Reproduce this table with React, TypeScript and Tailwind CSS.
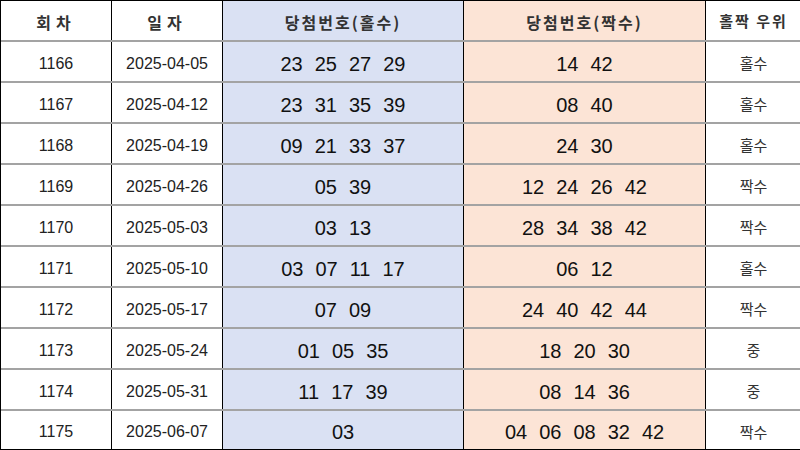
const rows = [
  { no: "1166", date: "2025-04-05", odd: ["23", "25", "27", "29"], even: ["14", "42"], res: "홀수" },
  { no: "1167", date: "2025-04-12", odd: ["23", "31", "35", "39"], even: ["08", "40"], res: "홀수" },
  { no: "1168", date: "2025-04-19", odd: ["09", "21", "33", "37"], even: ["24", "30"], res: "홀수" },
  { no: "1169", date: "2025-04-26", odd: ["05", "39"], even: ["12", "24", "26", "42"], res: "짝수" },
  { no: "1170", date: "2025-05-03", odd: ["03", "13"], even: ["28", "34", "38", "42"], res: "짝수" },
  { no: "1171", date: "2025-05-10", odd: ["03", "07", "11", "17"], even: ["06", "12"], res: "홀수" },
  { no: "1172", date: "2025-05-17", odd: ["07", "09"], even: ["24", "40", "42", "44"], res: "짝수" },
  { no: "1173", date: "2025-05-24", odd: ["01", "05", "35"], even: ["18", "20", "30"], res: "중" },
  { no: "1174", date: "2025-05-31", odd: ["11", "17", "39"], even: ["08", "14", "36"], res: "중" },
  { no: "1175", date: "2025-06-07", odd: ["03"], even: ["04", "06", "08", "32", "42"], res: "짝수" },
];

const kr = "font-['Noto_Sans_CJK_KR',sans-serif]";
const num = "font-['Liberation_Sans','Noto_Sans_CJK_KR',sans-serif]";

const Nums = ({ list }: { list: string[] }) => (
  <div className={`flex items-center justify-center gap-[12px] text-[20px] text-[#111] ${num}`}>
    {list.map((n, i) => (
      <span key={i}>{n}</span>
    ))}
  </div>
);

export default function App() {
  return (
    <div className="w-[800px] h-[450px] overflow-hidden bg-white border-t border-l border-black">
      <div className="grid grid-cols-[111px_111px_241px_242px_95px] h-[41px] border-b-2 border-[#a3a3a3]">
        <div className={`flex items-center justify-center pt-[2px] border-r border-black text-[16px] font-bold tracking-[5px] text-[#333] ${kr}`}>회차</div>
        <div className={`flex items-center justify-center pt-[2px] border-r border-black text-[16px] font-bold tracking-[5px] text-[#333] ${kr}`}>일자</div>
        <div className={`flex items-center justify-center pt-[2px] border-r border-black bg-[#dae1f3] text-[16px] font-bold tracking-[2px] text-[#333] ${kr}`}>당첨번호(홀수)</div>
        <div className={`flex items-center justify-center pt-[2px] border-r border-black bg-[#fce4d6] text-[16px] font-bold tracking-[2px] text-[#333] ${kr}`}>당첨번호(짝수)</div>
        <div className={`flex items-center justify-center pt-[2px] text-[15px] font-bold tracking-[2px] text-[#333] ${kr}`}>홀짝 우위</div>
      </div>
      {rows.map((r, i) => (
        <div
          key={r.no}
          className={`grid grid-cols-[111px_111px_241px_242px_95px] ${i === rows.length - 1 ? "border-b border-black h-[39px]" : "border-b-2 border-[#a3a3a3] h-[41px]"}`}
        >
          <div className={`flex items-center justify-center pt-[4px] border-r border-black text-[16px] text-[#222] ${num}`}>{r.no}</div>
          <div className={`flex items-center justify-center pt-[4px] border-r border-black text-[16px] text-[#222] ${num}`}>{r.date}</div>
          <div className="flex items-center justify-center pt-[4px] border-r border-black bg-[#dae1f3]">
            <Nums list={r.odd} />
          </div>
          <div className="flex items-center justify-center pt-[4px] border-r border-black bg-[#fce4d6]">
            <Nums list={r.even} />
          </div>
          <div className={`flex items-center justify-center pt-[4px] text-[15px] text-[#333] ${kr}`}>{r.res}</div>
        </div>
      ))}
    </div>
  );
}
